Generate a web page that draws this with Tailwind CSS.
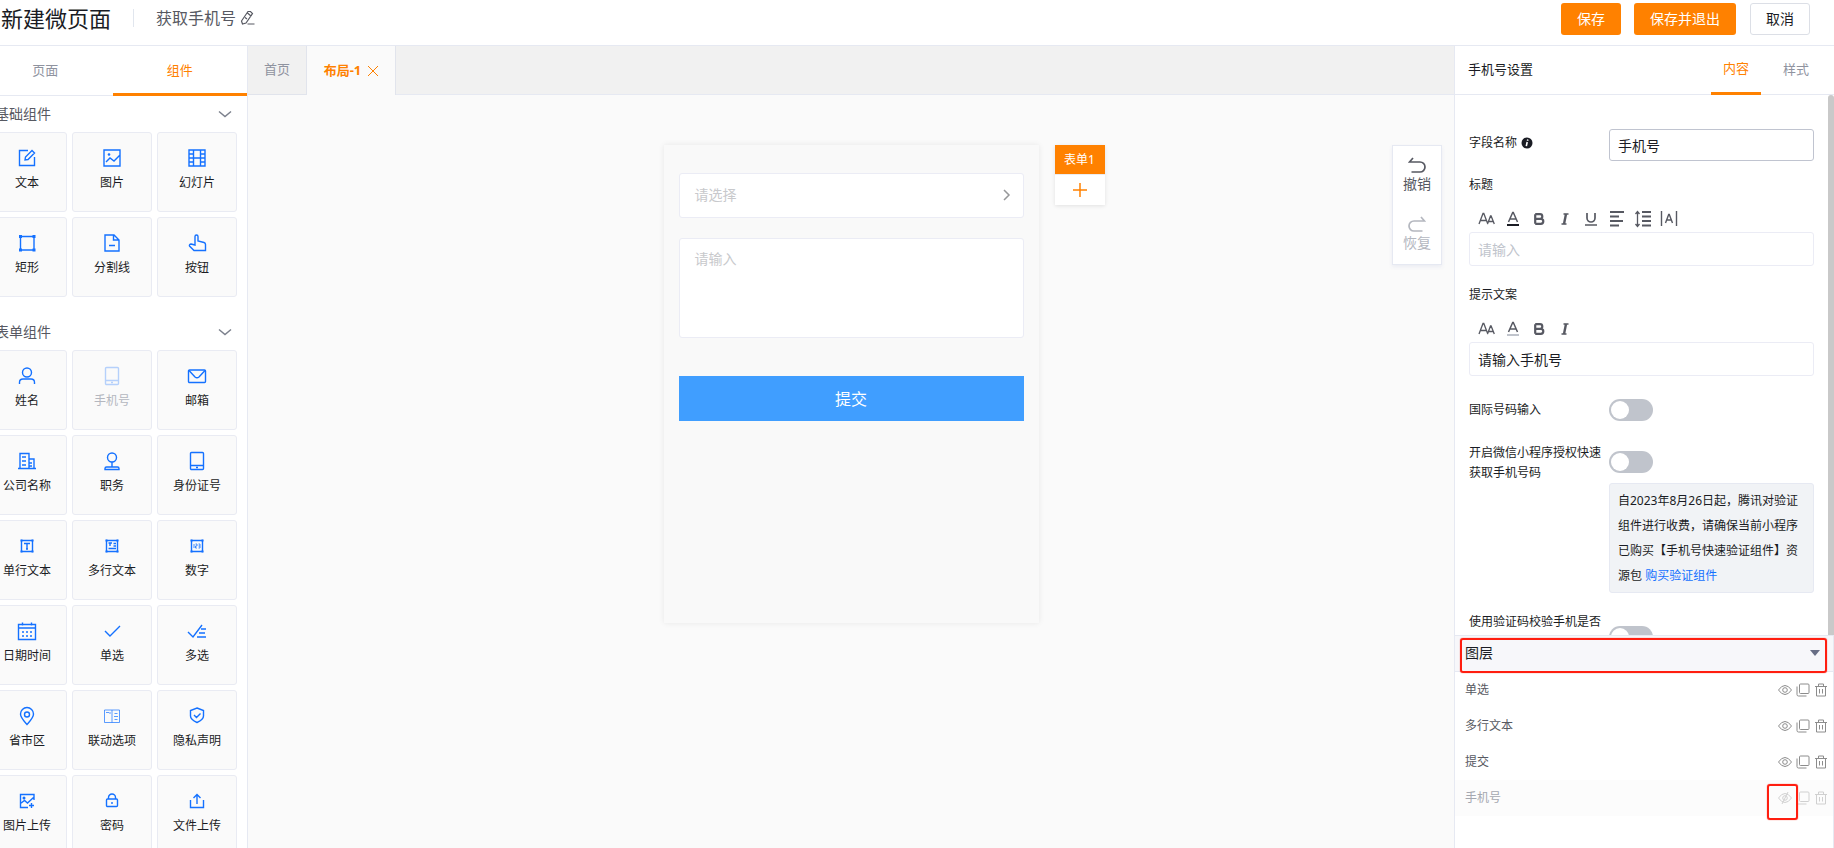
<!doctype html>
<html lang="zh-CN">
<head>
  <meta charset="UTF-8">
  <meta name="viewport" content="width=device-width, initial-scale=1.0">
  <title>新建微页面</title>
  <script src="https://cdn.jsdelivr.net/npm/@tailwindcss/browser@4"></script>
</head>
<body class="h-screen flex flex-col overflow-hidden bg-white text-xs text-[#1a1c24] font-['Noto_Sans','Noto_Sans_CJK_SC',sans-serif]">
  <!-- icons -->
  <svg class="hidden">
    <symbol id="i-text" viewBox="0 0 20 20"><path d="M11 2.500H2.500v15h15V9M8 12l.5-3L15 2.500l2.500 2.500L11 11.500z"/></symbol>
    <symbol id="i-image" viewBox="0 0 20 20"><path d="M2 2h16v16H2zM4 14l4-4 4 3 6-6"/><circle cx="7" cy="6.500" r="1.300" fill="currentColor" stroke="none"/></symbol>
    <symbol id="i-film" viewBox="0 0 20 20"><path d="M2 2h16v16H2zM6.500 2v16M13.500 2v16M2 6h4.500M2 10h16M2 14h4.500M13.500 6H18M13.500 14H18"/></symbol>
    <symbol id="i-rect" viewBox="0 0 20 20"><path d="M3.500 3.500h13.500v13.500H3.500z"/><path d="M2 2h3v3H2zM15.500 2h3v3h-3zM2 15.500h3v3H2zM15.500 15.500h3v3h-3z" fill="currentColor" stroke="none"/></symbol>
    <symbol id="i-line" viewBox="0 0 20 20"><path d="M3 2h9l5 5v11H3zM11.500 2v5H17M7 12.500h6"/></symbol>
    <symbol id="i-hand" viewBox="0 0 20 20"><path d="M8 12V3.500a1.500 1.500 0 0 1 3 0V8l6 1.500c1 .3 1.500 1 1.500 2V17.500H7l-4.500-4.500c-.5-1 .5-2 1.500-2z"/></symbol>
    <symbol id="i-user" viewBox="0 0 20 20"><circle cx="10" cy="6.500" r="4.500"/><path d="M2.500 18v-1.500c0-2 1.500-3.500 3.500-3.500h8c2 0 3.500 1.500 3.500 3.500V18"/></symbol>
    <symbol id="i-phone" viewBox="0 0 20 20"><rect x="3.500" y="1.500" width="13" height="17" rx="1"/><path d="M3.500 14.500h13M9 16.500h2"/></symbol>
    <symbol id="i-mail" viewBox="0 0 20 20"><rect x="1.500" y="4" width="17" height="12.500" rx="1"/><path d="M2 4.500l6 6.500q2 1.500 4 0l6-6.500"/></symbol>
    <symbol id="i-company" viewBox="0 0 20 20"><path d="M1 17.500h18M3 17.500V2.500h9v15M12 8h5v9.500M5 6h4M5 10h4M5 14h4M12 12h3M12 15h3"/></symbol>
    <symbol id="i-job" viewBox="0 0 20 20"><circle cx="10" cy="6.500" r="4.500"/><path d="M10 11v5M3 18.500v-1q0-1.500 1.500-1.500h11q1.500 0 1.500 1.500v1z"/></symbol>
    <symbol id="i-single" viewBox="0 0 20 20"><path d="M4.500 4.500h11v11h-11zM7 7.500h6M10 7.500v5.500M9 13h2"/><path d="M3.500 3.500h2v2h-2zM14.500 3.500h2v2h-2zM3.500 14.500h2v2h-2zM14.500 14.500h2v2h-2z" fill="currentColor" stroke="none"/></symbol>
    <symbol id="i-multi" viewBox="0 0 20 20"><path d="M4.500 4.500h11v11h-11z"/><path d="M6.500 7h3.500M8 7v3M11.500 7.500h2.500M11.500 10h2.500M6.500 12.500h7.500"/><path d="M3.500 3.500h2v2h-2zM14.500 3.500h2v2h-2zM3.500 14.500h2v2h-2zM14.500 14.500h2v2h-2z" fill="currentColor" stroke="none"/></symbol>
    <symbol id="i-number" viewBox="0 0 20 20"><path d="M4.500 4.500h11v11h-11z"/><path d="M7 8v4M8.500 8h1.500v2H8.500v2h1.500M11.500 8H13v4h-1.500M11.500 10H13" stroke-width=".8"/><path d="M3.500 3.500h2v2h-2zM14.500 3.500h2v2h-2zM3.500 14.500h2v2h-2zM14.500 14.500h2v2h-2z" fill="currentColor" stroke="none"/></symbol>
    <symbol id="i-date" viewBox="0 0 20 20"><path d="M1.500 3.500h17v15h-17zM1.500 7h17M5.500 1.500v3M14.500 1.500v3M5 11h2M9 11h2M13 11h2M5 15h2M9 15h2M13 15h2"/></symbol>
    <symbol id="i-radio" viewBox="0 0 20 20"><path d="M3 10l5 5L18 5"/></symbol>
    <symbol id="i-check" viewBox="0 0 20 20"><path d="M1 11l5 5 9-12M14 8h5M12 12h6M10 16h9"/></symbol>
    <symbol id="i-pin" viewBox="0 0 20 20"><path d="M10 18.500C6 14 3.500 11.500 3.500 8a6.500 6.500 0 0 1 13 0c0 3.500-2.500 6-6.500 10.500z"/><circle cx="10" cy="8.500" r="2.500"/></symbol>
    <symbol id="i-link" viewBox="0 0 20 20"><path d="M2.500 4h15v12.500h-15zM10 4v12.500M4 6.500h3M8 6v2M12.500 7.500h3M12 10.500h4M12.500 13.500h3" stroke-width=".7"/></symbol>
    <symbol id="i-shield" viewBox="0 0 20 20"><path d="M10 2l6.500 2.500v5.500c0 3-3 5-6.500 6.500-3.500-1.500-6.500-3.500-6.500-6.500V4.500zM7 9l2.500 2.500L13.500 7.500"/></symbol>
    <symbol id="i-upimage" viewBox="0 0 20 20"><path d="M17 9V3.500H3.500V16.500H11M3.500 12.500l4-3 3 2.500 6-5.500M14.500 12v5M12 14.500h5"/><circle cx="7" cy="7" r=".8" fill="currentColor"/></symbol>
    <symbol id="i-lock" viewBox="0 0 20 20"><rect x="4.500" y="8" width="11" height="7.500" rx="1"/><path d="M6.500 8V6.500a3.500 3.500 0 0 1 7 0V8M10 11v2"/></symbol>
    <symbol id="i-upload" viewBox="0 0 20 20"><path d="M3.500 9v7.500h13V9M10 13V4M6.500 7L10 3.500 13.500 7"/></symbol>
    <symbol id="i-down" viewBox="0 0 14 14"><path d="M1 4.500l6 5 6-5"/></symbol>
    <symbol id="i-size" viewBox="0 0 18 18"><path d="M1 14L5 3.500h.8l4 10.500M2.500 10.500h5.500M9.500 14l3-8h.6l3.200 8M10.500 11.500h4.800"/></symbol>
    <symbol id="i-color" viewBox="0 0 18 18"><path d="M4.500 12L8.700 2.500h.6L13.500 12M6 9h6" stroke-width="1.500"/></symbol>
    <symbol id="i-bold" viewBox="0 0 18 18"><path d="M5.200 4.200v9.600M5.200 4.200H10a2.300 2.300 0 0 1 0 4.600H5.200M10 8.800h.8a2.500 2.500 0 0 1 0 5H5.200" stroke-width="2.200"/></symbol>
    <symbol id="i-italic" viewBox="0 0 18 18"><path d="M7.500 4H12.500M5.500 14h5" stroke-width="1.500"/><path d="M10 4L8 14" stroke-width="2.400"/></symbol>
    <symbol id="i-underline" viewBox="0 0 18 18"><path d="M5 3v5a4 4 0 0 0 8 0V3M3 15h12" stroke-width="1.700"/></symbol>
    <symbol id="i-align" viewBox="0 0 18 18"><path d="M2 2h14M2 6.500h9M2 11h13M2 15.500h9" stroke-width="2"/></symbol>
    <symbol id="i-height" viewBox="0 0 18 18"><path d="M3.500 2v14M1.500 4l2-2.500 2 2.500M1.500 14l2 2.500 2-2.500"/><path d="M8 2h9M8 6.500h9M8 11h9M8 15.500h9" stroke-width="2"/></symbol>
    <symbol id="i-space" viewBox="0 0 18 18"><path d="M1.500 1v15M16.500 1v15M5.500 13L8.700 4.500h.6l3.200 8.500M6.500 10h5" stroke-width="1.400"/></symbol>
    <symbol id="i-eye" viewBox="0 0 14 14"><path d="M.5 7Q3.500 2.500 7 2.500T13.500 7Q10.500 11.500 7 11.500T.5 7z"/><circle cx="7" cy="7" r="2.300"/></symbol>
    <symbol id="i-copy" viewBox="0 0 14 14"><rect x="3.500" y="1" width="9.500" height="9.500" rx="1"/><path d="M1 3.500V11.500q0 1.500 1.500 1.500H10.500"/></symbol>
    <symbol id="i-trash" viewBox="0 0 14 14"><path d="M1 3.500h12M4.500 3.500V1h5v2.500M2.500 3.500v9.500h9v-9.500M5.500 6v4.500M8.500 6v4.500"/></symbol>
    <symbol id="i-undo" viewBox="0 0 18 18"><path d="M5 1L1.500 5H12a5 5 0 0 1 0 10H3.500" stroke-width="1.700"/></symbol>
  </svg>

  <header class="h-[46px] shrink-0 flex items-start justify-between border-b border-[#e6e9f2] pr-6">
    <div class="flex items-center">
      <h1 class="text-[22px] leading-9 pl-px">新建微页面</h1>
      <span class="w-px h-[18px] bg-[#e1e6ee] mx-[22px]"></span>
      <span class="text-base text-[#575962] leading-9">获取手机号</span>
      <button class="ml-1" aria-label="编辑">
        <svg class="size-4 fill-none stroke-[#575962] stroke-[1.2]" viewBox="0 0 16 16"><path d="M2.500 14L1.500 11 8 1.500h2.500L12.500 3.500 6 13zM7.500 3l3.500 3M5 7.500l2 1.500M7.500 14h7"/></svg>
      </button>
    </div>
    <div class="flex text-sm leading-5 pt-[3px]">
      <button class="h-8 px-4 rounded-[3px] bg-[#ff8100] text-white">保存</button>
      <button class="h-8 px-4 rounded-[3px] bg-[#ff8100] text-white ml-[13px]">保存并退出</button>
      <button class="h-8 px-[15px] rounded-[3px] border border-[#dcdfe6] ml-[14px]">取消</button>
    </div>
  </header>

  <div class="flex flex-1 min-h-0">
    <!-- left: component list -->
    <aside class="w-[270px] -ml-[22px] shrink-0 border-r border-[#e6e9f2] overflow-hidden">
      <nav class="flex h-[50px] border-b border-[#e6e9f2] text-[13px]">
        <button class="flex-1 text-[#8f939f]">页面</button>
        <button class="flex-1 text-[#ff8100] border-b-3 border-[#ff8100] -mb-px pt-[2px]">组件</button>
      </nav>
      <section class="mb-[17px]">
        <h2 class="flex items-center justify-between h-9 pl-[17px] pr-[15px] text-sm text-[#575962]">基础组件
          <svg class="size-[14px] fill-none stroke-[#7c818d] stroke-[1.5]"><use href="#i-down"/></svg>
        </h2>
        <div id="basicList" class="grid grid-cols-[80px_80px_80px] gap-[5px] pl-[9px]"></div>
      </section>
      <section>
        <h2 class="flex items-center justify-between h-9 pl-[17px] pr-[15px] text-sm text-[#575962]">表单组件
          <svg class="size-[14px] fill-none stroke-[#7c818d] stroke-[1.5]"><use href="#i-down"/></svg>
        </h2>
        <div id="formList" class="grid grid-cols-[80px_80px_80px] gap-[5px] pl-[9px]"></div>
      </section>
    </aside>

    <!-- middle: canvas -->
    <main class="flex-1 min-w-0 bg-[#fafafa] relative">
      <nav class="flex h-[49px] bg-[#f1f1f1] text-[13px]">
        <button class="w-[59px] border-b border-r border-[#e1e4ec] text-[#8f939f]">首页</button>
        <button class="w-[89px] flex items-center justify-center gap-[7px] border-r border-[#e1e4ec] bg-[#fafafa] text-[#ff8100] font-bold">布局-1
          <svg class="size-[10px] fill-none stroke-[#ff8100]" viewBox="0 0 10 10"><path d="M0 0l10 10M10 0L0 10"/></svg>
        </button>
        <span class="flex-1 border-b border-[#e6e9f2]"></span>
      </nav>
      <div class="relative w-[375px] h-[478px] mx-auto mt-[50px] px-[15px] pt-7 bg-[#f9f9f9] shadow-[0_0_6px_rgba(0,0,0,0.08)]">
        <button class="flex items-center justify-between w-full h-[45px] pl-[15px] pr-[10px] pb-px bg-white border border-[#ebecf5] rounded-[3px] text-sm text-[#c8c9cc]">请选择
          <svg class="size-[14px] fill-none stroke-[#969799] stroke-[1.5]" viewBox="0 0 14 14"><path d="M5 2l5 5-5 5"/></svg>
        </button>
        <textarea aria-label="多行文本" placeholder="请输入" class="block w-full h-[100px] mt-5 px-[15px] py-[10px] bg-white border border-[#ebecf5] rounded-[3px] text-sm leading-5 resize-none placeholder:text-[#c8c9cc]"></textarea>
        <button class="w-full h-[45px] mt-[38px] bg-[#409eff] text-white text-base">提交</button>
        <div class="absolute left-full top-0 ml-4 w-[50px] shadow-[0_1px_4px_rgba(0,0,0,0.1)]">
          <button class="block w-full h-[29px] bg-[#ff8100] text-white text-xs">表单1</button>
          <button class="flex w-full h-[31px] items-center justify-center pb-px bg-white border-t border-[#ebecf0]" aria-label="添加">
            <svg class="size-[14px] stroke-[#ff8100] stroke-[1.5]" viewBox="0 0 14 14"><path d="M7 0v14M0 7h14"/></svg>
          </button>
        </div>
      </div>
      <div class="absolute right-3 top-[99px] w-[50px] h-[120px] flex flex-col justify-between pt-[11px] pb-3 bg-white border border-[#e6e9f2] shadow-[0_2px_4px_rgba(60,80,160,0.08)] text-sm leading-[18px]">
        <button class="flex flex-col items-center text-[#575962]">
          <svg class="size-[18px] fill-none stroke-current"><use href="#i-undo"/></svg>撤销
        </button>
        <button class="flex flex-col items-center text-[#b4b7bf]" disabled>
          <svg class="size-[18px] fill-none stroke-current -scale-x-100"><use href="#i-undo"/></svg>恢复
        </button>
      </div>
    </main>

    <!-- right: settings and layers -->
    <aside class="w-[380px] shrink-0 flex flex-col border-l border-[#e6e9f2]">
      <nav class="flex items-stretch h-[49px] shrink-0 px-[13px] border-b border-[#e6e9f2] text-[13px]">
        <h2 class="flex-1 self-center">手机号设置</h2>
        <button class="w-[50px] -mb-px border-b-3 border-[#ff8100] text-[#ff8100]">内容</button>
        <button class="w-[50px] ml-[10px] text-[#8f939f]">样式</button>
      </nav>
      <div class="flex flex-1 min-h-0 overflow-hidden">
        <form class="flex-1 min-w-0 px-[14px] pt-[34px] leading-5">
          <div class="flex h-8">
            <label for="fieldName" class="flex items-center w-[140px] h-7">字段名称
              <svg class="size-3 ml-1" viewBox="0 0 12 12"><circle cx="6" cy="6" r="5.500" fill="#1a1c24"/><path d="M6.800 2.500L6.500 3.800M6.200 5L5.300 9.200" stroke="#fff" stroke-width="1.600"/></svg>
            </label>
            <input id="fieldName" value="手机号" class="flex-1 min-w-0 h-8 px-2 border border-[#c0c4d0] rounded-[3px] text-sm">
          </div>
          <label for="title" class="block mt-[14px]">标题</label>
          <div id="titleTools" class="flex items-center h-[26px] gap-2 mt-[11px] pl-[9px] text-[#575962]"></div>
          <input id="title" placeholder="请输入" class="block w-full h-[34px] px-2 border border-[#ebecf5] rounded-[3px] text-sm placeholder:text-[#c0c4cc]">
          <label for="hint" class="block mt-[19px]">提示文案</label>
          <div id="hintTools" class="flex items-center h-[26px] gap-2 mt-[11px] pl-[9px] text-[#575962]"></div>
          <input id="hint" value="请输入手机号" class="block w-full h-[34px] px-2 border border-[#ebecf5] rounded-[3px] text-sm">
          <div class="flex items-center mt-[23px]">
            <label for="intl" class="w-[140px]">国际号码输入</label>
            <input id="intl" type="checkbox" class="appearance-none w-11 h-[22px] rounded-full bg-[#c0c4cc] before:block before:size-[18px] before:m-[2px] before:rounded-full before:bg-white">
          </div>
          <div class="flex mt-[22px]">
            <label for="wxAuth" class="w-[140px] shrink-0">开启微信小程序授权快速获取手机号码</label>
            <div class="flex-1">
              <input id="wxAuth" type="checkbox" class="block appearance-none w-11 h-[22px] mt-2 rounded-full bg-[#c0c4cc] before:block before:size-[18px] before:m-[2px] before:rounded-full before:bg-white">
              <p class="mt-[10px] px-2 py-1 bg-[#f1f3f6] border border-[#e6e9f2] rounded-[3px] leading-[25px]">自2023年8月26日起，腾讯对验证组件进行收费，请确保当前小程序已购买【手机号快速验证组件】资源包 <a href="#" class="text-[#1471ff]">购买验证组件</a></p>
            </div>
          </div>
          <div class="flex mt-[19px]">
            <label for="verify" class="w-[140px]">使用验证码校验手机是否</label>
            <input id="verify" type="checkbox" class="appearance-none w-11 h-[22px] mt-[14px] rounded-full bg-[#c0c4cc] before:block before:size-[18px] before:m-[2px] before:rounded-full before:bg-white">
          </div>
        </form>
        <div class="w-[6px] shrink-0 rounded-t-full bg-[#c9c9c9]"></div>
      </div>
      <section class="relative h-[213px] shrink-0 border-t border-r border-[#e6e9f2]">
        <h2 class="flex items-center justify-between h-9 pl-[10px] pr-[13px] pb-px bg-[#f7f7fa] border-b border-[#e6e9f2] text-sm">图层
          <svg class="w-[10px] h-[6px]" viewBox="0 0 10 6"><path d="M0 0h10L5 6z" fill="#686e85"/></svg>
        </h2>
        <ul id="layerList"></ul>
        <div class="absolute left-[5px] right-[6px] top-[2px] h-[35px] border-2 border-[#ff1e10] rounded-[3px] shadow-[0_0_1px_#ff1e10]"></div>
        <div class="absolute right-[35px] top-[148px] w-[31px] h-9 border-2 border-[#ff1e10] rounded-[3px] shadow-[0_0_1px_#ff1e10]"></div>
      </section>
    </aside>
  </div>

  <script>
    const basic = [
      ["text", "文本"], ["image", "图片"], ["film", "幻灯片"],
      ["rect", "矩形"], ["line", "分割线"], ["hand", "按钮"],
    ];
    const form = [
      ["user", "姓名"], ["phone", "手机号", true], ["mail", "邮箱"],
      ["company", "公司名称"], ["job", "职务"], ["phone", "身份证号"],
      ["single", "单行文本"], ["multi", "多行文本"], ["number", "数字"],
      ["date", "日期时间"], ["radio", "单选"], ["check", "多选"],
      ["pin", "省市区"], ["link", "联动选项"], ["shield", "隐私声明"],
      ["upimage", "图片上传"], ["lock", "密码"], ["upload", "文件上传"],
    ];
    const tools = ["size", "color", "bold", "italic", "underline", "align", "height", "space"];
    const layers = [["单选"], ["多行文本"], ["提交"], ["手机号", true]];

    function renderCards(id, items) {
      document.getElementById(id).innerHTML = items.map(([icon, name, disabled]) => `
        <button class="h-20 flex flex-col items-center gap-[6px] pt-[15px] bg-[#fafafa] border border-[#e9ebf3] rounded-[3px] leading-[18px] disabled:text-[#b4b7bf]" ${disabled ? "disabled" : ""}>
          <svg class="size-5 fill-none stroke-current stroke-[1.4] ${disabled ? "text-[#b5d0fb]" : "text-[#1471ff]"}"><use href="#i-${icon}"/></svg>
          ${name}
        </button>`).join("");
    }

    function renderTools(id, items, bar) {
      document.getElementById(id).innerHTML = items.map((icon) => `
        <button type="button" aria-label="${icon}" class="relative">
          <svg class="size-[18px] fill-none stroke-current stroke-[1.3]"><use href="#i-${icon}"/></svg>
          ${icon === "color" ? `<span class="absolute left-[3px] bottom-[2px] w-3 h-[2px] ${bar}"></span>` : ""}
        </button>`).join("");
    }

    renderCards("basicList", basic);
    renderCards("formList", form);
    renderTools("titleTools", tools, "bg-[#1a1c24]");
    renderTools("hintTools", tools.slice(0, 4), "bg-[#c0c4cc]");

    document.getElementById("layerList").innerHTML = layers.map(([name, hidden]) => `
      <li class="flex items-center h-9 pl-[10px] pr-[5px] ${hidden ? "bg-[#fcfcfc] text-[#a5a8b0]" : "text-[#575962]"}">
        <span class="flex-1">${name}</span>
        <span class="flex gap-1 ${hidden ? "text-[#d0d0d0]" : "text-[#8c8c8c]"}">
          <button aria-label="显示"><svg class="size-[14px] fill-none stroke-current"><use href="#i-eye"/>${hidden ? '<path d="M10 1L4 13"/>' : ""}</svg></button>
          <button aria-label="复制"><svg class="size-[14px] fill-none stroke-current"><use href="#i-copy"/></svg></button>
          <button aria-label="删除"><svg class="size-[14px] fill-none stroke-current"><use href="#i-trash"/></svg></button>
        </span>
      </li>`).join("");
  </script>
</body>
</html>
